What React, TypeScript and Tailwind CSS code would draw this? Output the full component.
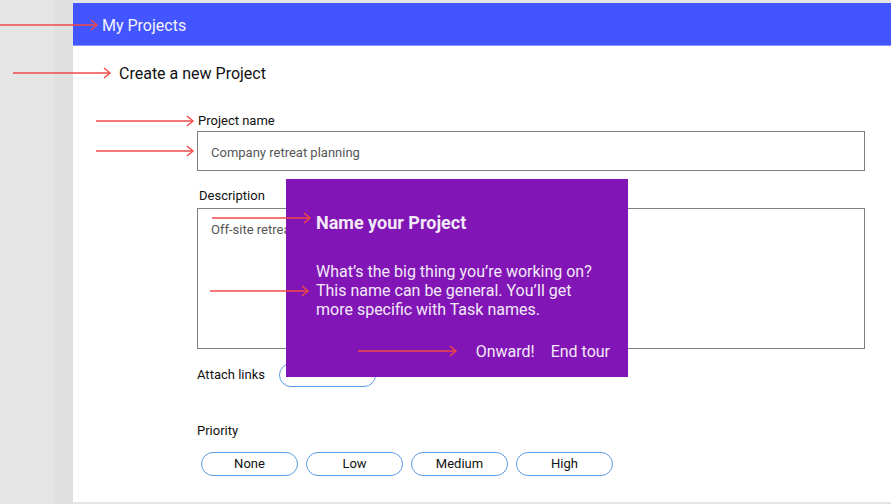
import React from "react";

const arrows = [
  { x1: 0, x2: 97, y: 25 },
  { x1: 13, x2: 110, y: 73 },
  { x1: 96, x2: 193, y: 121 },
  { x1: 96, x2: 193, y: 151 },
  { x1: 212, x2: 310, y: 218 },
  { x1: 210, x2: 308, y: 291 },
  { x1: 358, x2: 456, y: 351 },
];

function PillButton({ label }: { label: string }) {
  return (
    <button className="h-[24px] w-[97px] rounded-full border-[1.5px] border-[#5b9be3] bg-white text-[13px] text-[#111]">
      {label}
    </button>
  );
}

export default function App() {
  return (
    <div
      className="relative flex h-[504px] w-[891px] overflow-hidden bg-[#e5e5e5]"
      style={{ fontFamily: "Roboto, 'Noto Sans', sans-serif" }}
    >
      <div className="w-[55px]" />
      <div className="w-[18px] bg-[#e0e0e0]" />
      <div className="flex flex-1 flex-col pt-[3px] pb-[2px]">
        <header className="flex h-[43px] items-center border-b border-[#8a95ff] bg-[#4355ff] pl-[29px] pt-[4px] text-[16px] text-[#f2f3ff]">
          My Projects
        </header>
        <main className="flex-1 bg-white">
          <h1 className="mt-[16px] pl-[46px] text-[16px] leading-[24px] text-[#111]">
            Create a new Project
          </h1>
          <div className="mt-[27px] pl-[124px] pr-[26px]">
            <label className="block pl-[1px] text-[13px] leading-[16px] text-[#111]">Project name</label>
            <div className="mt-[2px] flex h-[40px] items-center border border-[#808080] pl-[13px] pt-[3px] text-[13px] text-[#555]">
              Company retreat planning
            </div>
            <label className="mt-[17px] block pl-[2px] text-[13px] leading-[16px] text-[#111]">
              Description
            </label>
            <div className="mt-[4px] h-[141px] border border-[#808080] pl-[13px] pt-[13px] text-[13px] leading-[16px] text-[#555]">
              Off-site retreat
            </div>
            <div className="mt-[14px] flex items-center gap-[14px]">
              <span className="text-[13px] text-[#111]">Attach links</span>
              <PillButton label="" />
            </div>
            <div className="mt-[36px] text-[13px] leading-[16px] text-[#111]">Priority</div>
            <div className="mt-[13px] flex gap-[8px] pl-[4px]">
              <PillButton label="None" />
              <PillButton label="Low" />
              <PillButton label="Medium" />
              <PillButton label="High" />
            </div>
          </div>
        </main>
      </div>

      <div className="absolute left-[286px] top-[179px] flex h-[198px] w-[342px] flex-col bg-[#8115b5] pl-[30px] pr-[18px] pt-[33px] text-[#f3e9f8]">
        <div className="text-[18px] font-bold leading-[22px]">Name your Project</div>
        <p className="mt-[28px] text-[16px] leading-[19px]">
          What’s the big thing you’re working on?
          <br />
          This name can be general. You’ll get
          <br />
          more specific with Task names.
        </p>
        <div className="mt-[23px] flex justify-end gap-[16px] text-[16px] leading-[19px]">
          <span>Onward!</span>
          <span>End tour</span>
        </div>
      </div>

      <svg className="pointer-events-none absolute left-0 top-0" width="891" height="504">
        {arrows.map((a, i) => (
          <g key={i} stroke="#f24848" strokeWidth="1.4" fill="none">
            <line x1={a.x1} y1={a.y} x2={a.x2} y2={a.y} />
            <polyline points={`${a.x2 - 6},${a.y - 5} ${a.x2},${a.y} ${a.x2 - 6},${a.y + 5}`} />
          </g>
        ))}
      </svg>
    </div>
  );
}
